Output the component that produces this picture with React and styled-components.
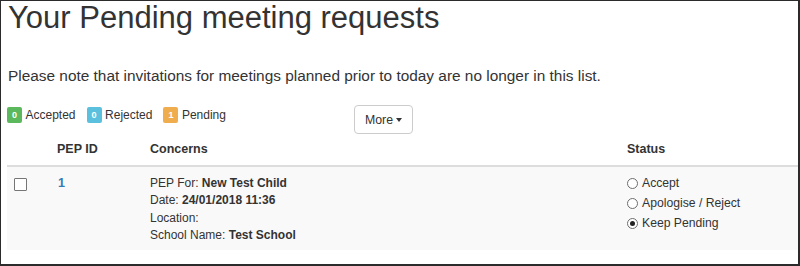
import React, { useState } from 'react';
import styled, { createGlobalStyle } from 'styled-components';

const GlobalStyle = createGlobalStyle`
  html, body {
    margin: 0;
    padding: 0;
    background: #ffffff;
  }
  body {
    font-family: "Liberation Sans", Arial, sans-serif;
    color: #333333;
  }
`;

const Frame = styled.div`
  box-sizing: border-box;
  width: 800px;
  height: 266px;
  border-style: solid;
  border-color: #2b2b2b;
  border-width: 1px 2px 2px 1px;
  padding: 0 0 0 6px;
  overflow: hidden;
  background: #fff;
`;

const Title = styled.h1`
  margin: 0;
  font-size: 31px;
  font-weight: 400;
  line-height: 34px;
  color: #333;
  padding-left: 1px;
`;

const Note = styled.p`
  margin: 30px 0 0;
  font-size: 15.4px;
  line-height: 22px;
  padding-left: 1px;
`;

const Toolbar = styled.div`
  display: flex;
  align-items: flex-start;
  margin-top: 18px;
`;

const Legend = styled.div`
  display: flex;
  align-items: center;
  gap: 11px;
  width: 347px;
  padding-top: 2px;
`;

const LegendItem = styled.span`
  display: inline-flex;
  align-items: center;
  gap: 3.5px;
  font-size: 12px;
  line-height: 16px;
`;

const Badge = styled.span`
  display: inline-flex;
  align-items: center;
  justify-content: center;
  width: 15px;
  height: 16px;
  border-radius: 2px;
  background: ${p => p.tone};
  color: #fff;
  font-size: 9px;
  font-weight: 700;
`;

const MoreButton = styled.button`
  display: inline-flex;
  align-items: center;
  gap: 3px;
  height: 29px;
  padding: 0 10px;
  border: 1px solid #ccc;
  border-radius: 4px;
  background: #fff;
  color: #333;
  font-family: "Liberation Sans", Arial, sans-serif;
  font-size: 12.3px;
  cursor: pointer;
`;

const Caret = styled.span`
  width: 0;
  height: 0;
  border-left: 3.5px solid transparent;
  border-right: 3.5px solid transparent;
  border-top: 4px solid #333;
`;

const Table = styled.table`
  width: 100%;
  border-collapse: collapse;
  table-layout: fixed;
  margin-top: -1px;
  font-size: 12.5px;
`;

const HeadCell = styled.th`
  text-align: left;
  font-weight: 700;
  padding: 8px 7px 7px;
  line-height: 17px;
  border-bottom: 2px solid #dddddd;
  vertical-align: bottom;
`;

const Row = styled.tr`
  background: #f9f9f9;
`;

const Cell = styled.td`
  padding: ${p => (p.tight ? '7px 7px 6px' : '8px 7px 6px')};
  vertical-align: top;
  line-height: 17.3px;
`;

const Check = styled.span`
  display: block;
  box-sizing: border-box;
  width: 13px;
  height: 13px;
  margin-top: 3px;
  border: 1px solid #767676;
  border-radius: 1px;
  background: #fff;
`;

const IdLink = styled.a`
  color: #337ab7;
  font-weight: 700;
  text-decoration: none;
  padding-left: 1px;
`;

const Line = styled.div`
  font-size: 12px;
`;

const Options = styled.div`
  display: flex;
  flex-direction: column;
`;

const Option = styled.label`
  display: flex;
  align-items: center;
  gap: 4px;
  height: 19.7px;
  font-size: 12.2px;
  cursor: pointer;
`;

const Radio = styled.span`
  box-sizing: border-box;
  width: 11px;
  height: 11px;
  border-radius: 50%;
  border: 1px solid #6d6d6d;
  background: #fff;
  display: inline-flex;
  align-items: center;
  justify-content: center;

  &::after {
    content: '';
    width: 5px;
    height: 5px;
    border-radius: 50%;
    background: ${p => (p.checked ? '#222' : 'transparent')};
  }
`;

const statuses = ['Accept', 'Apologise / Reject', 'Keep Pending'];

const App = () => {
  const [status, setStatus] = useState('Keep Pending');

  return (
    <Frame>
      <GlobalStyle />
      <Title>Your Pending meeting requests</Title>
      <Note>
        Please note that invitations for meetings planned prior to today are no longer in this list.
      </Note>
      <Toolbar>
        <Legend>
          <LegendItem><Badge tone="#5cb85c">0</Badge>Accepted</LegendItem>
          <LegendItem><Badge tone="#5bc0de">0</Badge>Rejected</LegendItem>
          <LegendItem><Badge tone="#f0ad4e">1</Badge>Pending</LegendItem>
        </Legend>
        <MoreButton>More <Caret /></MoreButton>
      </Toolbar>
      <Table>
        <colgroup>
          <col style={{ width: 43 }} />
          <col style={{ width: 93 }} />
          <col />
          <col style={{ width: 178 }} />
        </colgroup>
        <thead>
          <tr>
            <HeadCell />
            <HeadCell>PEP ID</HeadCell>
            <HeadCell>Concerns</HeadCell>
            <HeadCell>Status</HeadCell>
          </tr>
        </thead>
        <tbody>
          <Row>
            <Cell><Check /></Cell>
            <Cell><IdLink href="#">1</IdLink></Cell>
            <Cell>
              <Line>PEP For: <b>New Test Child</b></Line>
              <Line>Date: <b>24/01/2018 11:36</b></Line>
              <Line>Location:</Line>
              <Line>School Name: <b>Test School</b></Line>
            </Cell>
            <Cell tight>
              <Options>
                {statuses.map(s => (
                  <Option key={s} onClick={() => setStatus(s)}>
                    <Radio checked={status === s} />
                    {s}
                  </Option>
                ))}
              </Options>
            </Cell>
          </Row>
        </tbody>
      </Table>
    </Frame>
  );
};

export default App;
